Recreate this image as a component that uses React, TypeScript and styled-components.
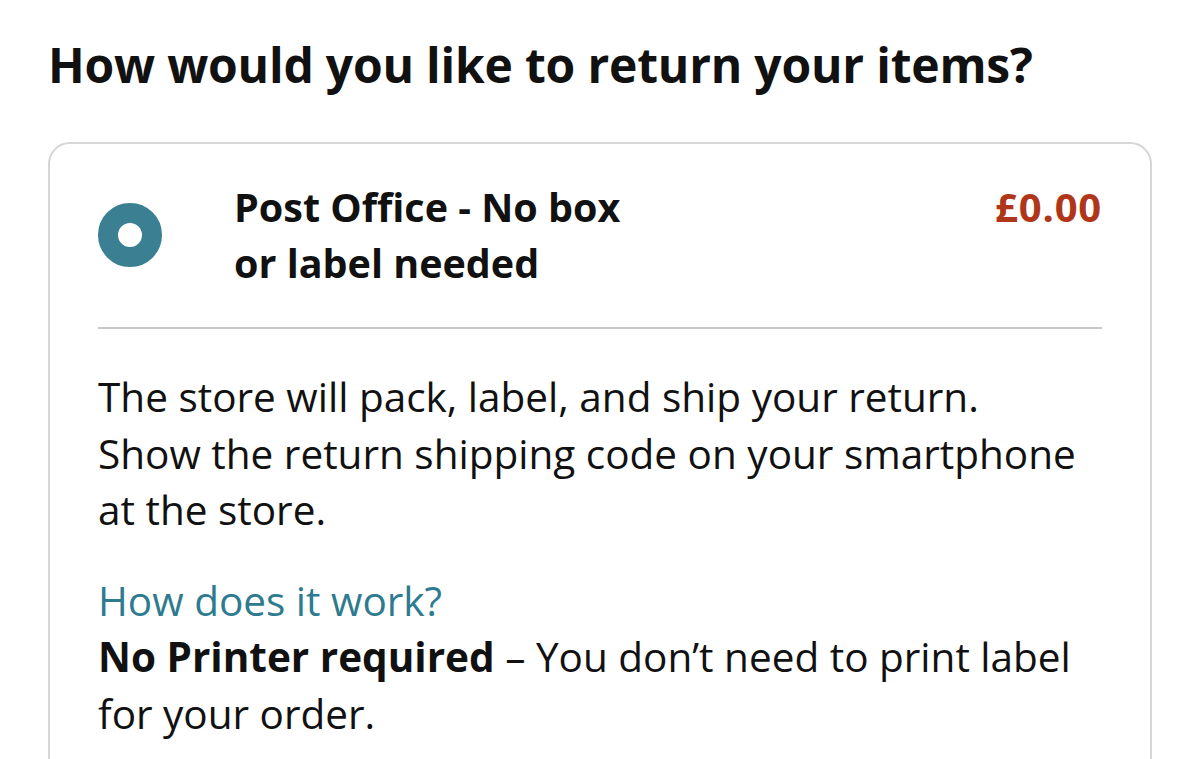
import styled, { createGlobalStyle } from 'styled-components';

const GlobalStyle = createGlobalStyle`
    body {
        margin: 0;
        background: #ffffff;
        font-family: 'Open Sans', 'Noto Sans', sans-serif;
        color: #111111;
    }
`;

const App = (): JSX.Element => {
    return (
        <Page>
            <GlobalStyle />
            <Heading>How would you like to return your items?</Heading>
            <OptionCard>
                <OptionHeader>
                    <RadioDot />
                    <OptionTitle>
                        Post Office - No box
                        <br />
                        or label needed
                    </OptionTitle>
                    <Price>£0.00</Price>
                </OptionHeader>
                <Divider />
                <Body>
                    <Paragraph>
                        The store will pack, label, and ship your return.
                        <br />
                        Show the return shipping code on your smartphone
                        <br />
                        at the store.
                    </Paragraph>
                    <Paragraph>
                        <HelpLink href="#">How does it work?</HelpLink>
                        <br />
                        <strong>No Printer required</strong> – You don’t need to print label
                        <br />
                        for your order.
                    </Paragraph>
                </Body>
            </OptionCard>
        </Page>
    );
};

export default App;

const Page = styled.div`
    padding: 30px 48px 0 48px;
    width: 1200px;
    height: 759px;
    box-sizing: border-box;
    overflow: hidden;
`;

const Heading = styled.h1`
    margin: 0 0 42px 0;
    font-size: 48px;
    font-weight: 700;
    line-height: 70px;
    letter-spacing: -0.2px;
`;

const OptionCard = styled.div`
    border: 2px solid #d6d6d6;
    border-radius: 22px;
    padding: 35px 48px 40px 48px;
`;

const OptionHeader = styled.div`
    display: flex;
    align-items: flex-start;
`;

const RadioDot = styled.span`
    flex: none;
    width: 24px;
    height: 24px;
    margin-top: 24px;
    margin-right: 72px;
    border-radius: 50%;
    border: 20px solid #3a7f92;
    background: #ffffff;
`;

const OptionTitle = styled.div`
    flex: 1;
    font-size: 39.5px;
    font-weight: 700;
    line-height: 56px;
`;

const Price = styled.div`
    font-size: 40px;
    font-weight: 700;
    line-height: 56px;
    letter-spacing: 0.8px;
    color: #b0361a;
`;

const Divider = styled.hr`
    margin: 36px 0 0 0;
    border: none;
    border-top: 2px solid #c9c9c9;
`;

const Body = styled.div`
    padding-top: 40px;
`;

const Paragraph = styled.p`
    margin: 0 0 34px 0;
    font-size: 40.5px;
    line-height: 56.5px;
    font-weight: 400;
`;

const HelpLink = styled.a`
    color: #2e7b90;
    text-decoration: none;
`;
